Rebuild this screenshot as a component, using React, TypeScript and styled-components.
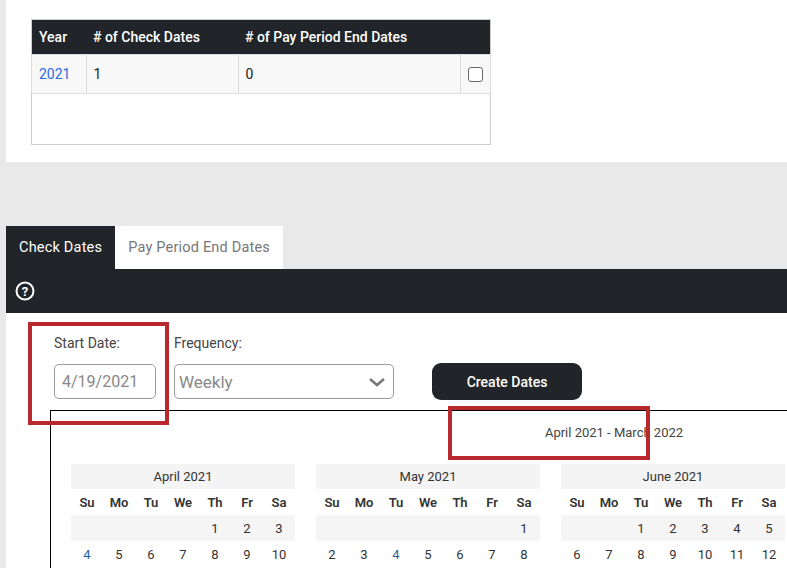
import styled, { createGlobalStyle } from "styled-components";

const Global = createGlobalStyle`
  body { margin: 0; background: #e9e9e9; font-family: Roboto, "Noto Sans", sans-serif; overflow: hidden; }
`;

const Page = styled.div`
  width: 787px;
  height: 568px;
  position: relative;
  overflow: hidden;
`;

const TopPanel = styled.div`
  margin-left: 6px;
  height: 143px;
  background: #fff;
  padding: 19px 0 0 25px;
`;

const Table = styled.table`
  width: 460px;
  border-collapse: collapse;
  border: 1px solid #ccc;
  font-size: 14px;
  th {
    background: #212529;
    color: #fff;
    font-weight: 500;
    text-align: left;
    height: 34px;
    padding: 0 7px;
  }
  td {
    background: #f8f8f8;
    height: 38px;
    padding: 0 7px;
    border: 1px solid #ddd;
    color: #222;
  }
`;

const Filler = styled.div`
  height: 50px;
  width: 458px;
  border: 1px solid #ccc;
  border-top: none;
  background: #fff;
`;

const YearLink = styled.a`
  color: #2a6ae0;
`;

const Box = styled.span`
  display: inline-block;
  width: 13px;
  height: 13px;
  border: 1px solid #666;
  border-radius: 3px;
  background: #fff;
  vertical-align: middle;
`;

const Tabs = styled.div`
  display: flex;
  margin: 64px 0 0 6px;
`;

const Tab = styled.div<{ active?: boolean }>`
  height: 43px;
  line-height: 43px;
  padding: 0 13px;
  font-size: 14.5px;
  letter-spacing: 0.2px;
  background: ${({ active }) => (active ? "#212529" : "#fff")};
  color: ${({ active }) => (active ? "#fff" : "#777")};
`;

const Bar = styled.div`
  margin-left: 6px;
  height: 44px;
  background: #212529;
  display: flex;
  align-items: center;
  padding-left: 9px;
`;

const Content = styled.div`
  margin-left: 6px;
  background: #fff;
  height: 260px;
  padding: 22px 0 0 48px;
  box-sizing: border-box;
`;

const FormRow = styled.div`
  display: flex;
  align-items: flex-end;
`;

const Field = styled.div`
  display: flex;
  flex-direction: column;
  gap: 13px;
  margin-right: 18px;
`;

const Label = styled.label`
  font-size: 14px;
  color: #444;
  padding-left: 0;
`;

const Input = styled.div<{ w: number }>`
  width: ${({ w }) => w}px;
  height: 35px;
  border: 1px solid #999;
  border-radius: 5px;
  box-sizing: border-box;
  display: flex;
  align-items: center;
  justify-content: space-between;
  padding: 0 7px;
  color: #888;
`;

const Button = styled.button`
  height: 37px;
  width: 150px;
  background: #212529;
  color: #fff;
  border: none;
  border-radius: 9px;
  font-size: 14px;
  font-weight: 500;
  font-family: inherit;
  margin: 0 0 -1px 20px;
`;

const Calendar = styled.div`
  margin: 11px 0 0 -4px;
  border: 1px solid #000;
  border-right: none;
  height: 200px;
  padding: 14px 0 0 20px;
`;

const Range = styled.div`
  font-size: 13px;
  color: #444;
  text-align: center;
  padding-left: 300px;
  width: 486px;
`;

const Months = styled.div`
  display: flex;
  gap: 21px;
  margin-top: 24px;
`;

const Month = styled.div`
  width: 224px;
  font-size: 13px;
`;

const MonthHead = styled.div`
  background: #f4f4f4;
  height: 25px;
  line-height: 25px;
  text-align: center;
  color: #333;
`;

const Grid = styled.div<{ shade?: boolean; bold?: boolean }>`
  display: grid;
  grid-template-columns: repeat(7, 1fr);
  height: 26px;
  align-items: center;
  text-align: center;
  background: ${({ shade }) => (shade ? "#f5f5f5" : "transparent")};
  font-weight: ${({ bold }) => (bold ? 600 : 400)};
  color: #333;
`;

const Day = styled.span<{ hl?: boolean }>`
  color: ${({ hl }) => (hl ? "#1f5fa8" : "#333")};
`;

const Mark = styled.div`
  position: absolute;
  border: 4px solid #b8282c;
`;

const weekdays = ["Su", "Mo", "Tu", "We", "Th", "Fr", "Sa"];
const months = [
  { name: "April 2021", r1: ["", "", "", "", "1", "2", "3"], r2: ["4", "5", "6", "7", "8", "9", "10"], hl: ["4"] },
  { name: "May 2021", r1: ["", "", "", "", "", "", "1"], r2: ["2", "3", "4", "5", "6", "7", "8"], hl: ["4"] },
  { name: "June 2021", r1: ["", "", "1", "2", "3", "4", "5"], r2: ["6", "7", "8", "9", "10", "11", "12"], hl: ["4"] },
];

export default function App() {
  return (
    <Page>
      <Global />
      <TopPanel>
        <Table>
          <thead>
            <tr>
              <th style={{ width: 40 }}>Year</th>
              <th style={{ width: 138 }}># of Check Dates</th>
              <th># of Pay Period End Dates</th>
              <th style={{ width: 14 }}></th>
            </tr>
          </thead>
          <tbody>
            <tr>
              <td><YearLink>2021</YearLink></td>
              <td>1</td>
              <td>0</td>
              <td><Box /></td>
            </tr>
          </tbody>
        </Table>
        <Filler />
      </TopPanel>
      <Tabs>
        <Tab active>Check Dates</Tab>
        <Tab>Pay Period End Dates</Tab>
      </Tabs>
      <Bar>
        <svg width="20" height="20" viewBox="0 0 20 20">
          <circle cx="10" cy="10" r="8.5" fill="none" stroke="#fff" strokeWidth="2" />
          <text x="10" y="14.5" fontSize="13" fontWeight="700" fill="#fff" textAnchor="middle" fontFamily="Roboto">?</text>
        </svg>
      </Bar>
      <Content>
        <FormRow>
          <Field>
            <Label>Start Date:</Label>
            <Input w={102}>4/19/2021</Input>
          </Field>
          <Field style={{ marginRight: 18 }}>
            <Label>Frequency:</Label>
            <Input w={220} style={{ fontSize: 17, paddingLeft: 4 }}>
              Weekly
              <svg width="18" height="12" viewBox="0 0 18 12">
                <path d="M2 3l7 6 7-6" fill="none" stroke="#777" strokeWidth="2.5" />
              </svg>
            </Input>
          </Field>
          <Button>Create Dates</Button>
        </FormRow>
        <Calendar>
          <Range>April 2021 - March 2022</Range>
          <Months>
            {months.map((m) => (
              <Month key={m.name}>
                <MonthHead>{m.name}</MonthHead>
                <Grid bold>{weekdays.map((w) => <span key={w}>{w}</span>)}</Grid>
                <Grid shade>{m.r1.map((d, i) => <Day key={i}>{d}</Day>)}</Grid>
                <Grid>{m.r2.map((d, i) => <Day key={i} hl={m.hl.includes(d)}>{d}</Day>)}</Grid>
              </Month>
            ))}
          </Months>
        </Calendar>
      </Content>
      <Mark style={{ left: 28, top: 322, width: 133, height: 95 }} />
      <Mark style={{ left: 448, top: 406, width: 194, height: 46 }} />
    </Page>
  );
}
